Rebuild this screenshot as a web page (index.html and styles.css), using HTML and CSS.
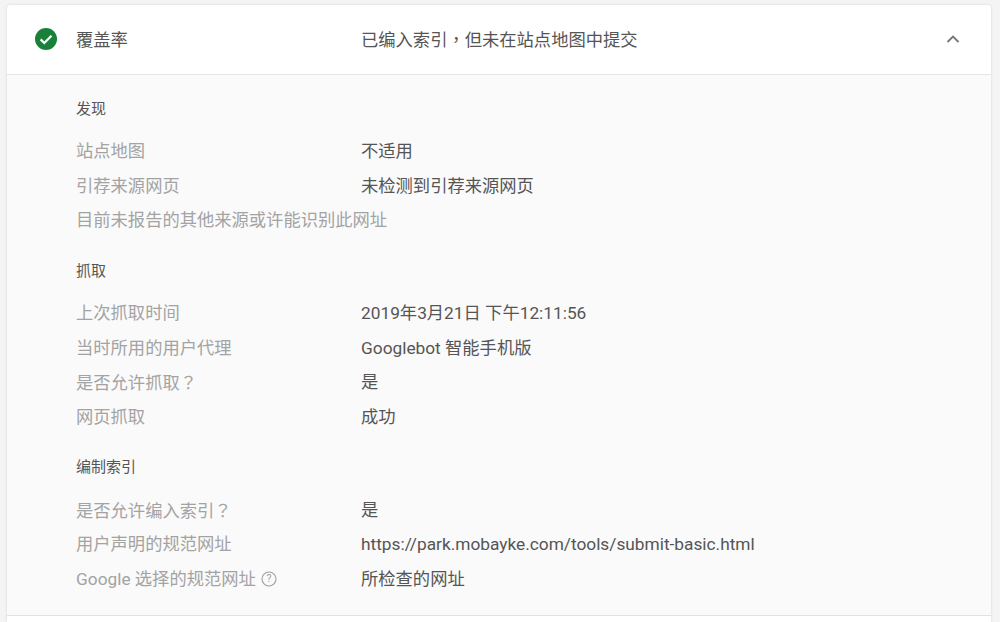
FILE: index.html
```html
<!DOCTYPE html>
<html lang="zh-CN">
<head>
<meta charset="utf-8">
<title>覆盖率</title>
<link rel="stylesheet" href="styles.css">
</head>
<body>
<main class="card">
  <header class="head">
    <svg class="check" viewBox="0 0 24 24" width="24" height="24"><circle cx="12" cy="12" r="11" fill="#188038"/><path d="M6.600 12.400l3.700 3.600 7.200-7.200" fill="none" stroke="#fff" stroke-width="2.300"/></svg>
    <div class="head-title">覆盖率</div>
    <div class="head-value">已编入索引<span class="punct" lang="zh-TW">，</span>但未在站点地图中提交</div>
    <svg class="chev" viewBox="0 0 14 10" width="14" height="10"><path d="M1.500 8l5.500-5.500L12.500 8" fill="none" stroke="#757575" stroke-width="1.800"/></svg>
  </header>
  <section class="body">
    <h3 class="sec sec-first">发现</h3>
    <div class="row"><span class="lab">站点地图</span><span class="val">不适用</span></div>
    <div class="row"><span class="lab">引荐来源网页</span><span class="val">未检测到引荐来源网页</span></div>
    <div class="row"><span class="lab">目前未报告的其他来源或许能识别此网址</span></div>
    <h3 class="sec">抓取</h3>
    <div class="row"><span class="lab">上次抓取时间</span><span class="val">2019年3月21日 下午12:11:56</span></div>
    <div class="row"><span class="lab">当时所用的用户代理</span><span class="val">Googlebot 智能手机版</span></div>
    <div class="row"><span class="lab">是否允许抓取<span class="punct" lang="zh-TW">？</span></span><span class="val">是</span></div>
    <div class="row"><span class="lab">网页抓取</span><span class="val">成功</span></div>
    <h3 class="sec">编制索引</h3>
    <div class="row"><span class="lab">是否允许编入索引<span class="punct" lang="zh-TW">？</span></span><span class="val">是</span></div>
    <div class="row"><span class="lab">用户声明的规范网址</span><span class="val">https://park.mobayke.com/tools/submit-basic.html</span></div>
    <div class="row"><span class="lab lab-help">Google 选择的规范网址
      <svg class="help" viewBox="0 0 16 16" width="16" height="16"><circle cx="8" cy="8" r="7" fill="none" stroke="#9e9e9e" stroke-width="1.100"/><text x="8" y="11.400" text-anchor="middle" class="help-q">?</text></svg></span><span class="val">所检查的网址</span></div>
  </section>
</main>
</body>
</html>
```
FILE: styles.css
```css
* { box-sizing: border-box; }
html, body { margin: 0; height: 622px; overflow: hidden; }
body {
  background: #f4f4f4;
  font-family: Roboto, "Noto Sans CJK SC", sans-serif;
  padding: 5px 9px 0 7px;
  color: #555;
}
.card {
  background: #fff;
  border-radius: 3px 3px 0 0;
  height: 617px;
  box-shadow: 0 0 3px rgba(0,0,0,.12);
}
.head {
  height: 70px;
  display: flex;
  align-items: center;
  padding: 0 0 2px 27px;
  border-bottom: 1px solid #e6e6e6;
  font-size: 17.3px;
}
.check { flex: none; }
.head-title { width: 285px; margin-left: 18px; }
.head-value { flex: 1; }
.chev { flex: none; margin-right: 31px; }
.punct { font-family: "Noto Sans CJK TC", sans-serif; }
.body {
  background: #fafafa;
  height: 541px;
  padding: 23.4px 0 0 69px;
  border-bottom: 1px solid #e2e2e2;
}
.sec {
  margin: 22.4px 0 14.5px;
  font-size: 15px;
  font-weight: 400;
  line-height: 22px;
  height: 22px;
  color: #555;
}
.sec-first { margin-top: 0; margin-bottom: 14px; }
.row {
  display: flex;
  height: 34.4px;
  line-height: 34.4px;
  font-size: 17.3px;
  white-space: nowrap;
}
.lab { width: 285px; color: #a3a3a3; flex: none; }
.lab-help { display: flex; align-items: center; gap: 5px; }
.val { color: #555; }
.help { flex: none; }
.help-q { font-size: 10.5px; fill: #9e9e9e; font-family: Roboto, sans-serif; }
```
